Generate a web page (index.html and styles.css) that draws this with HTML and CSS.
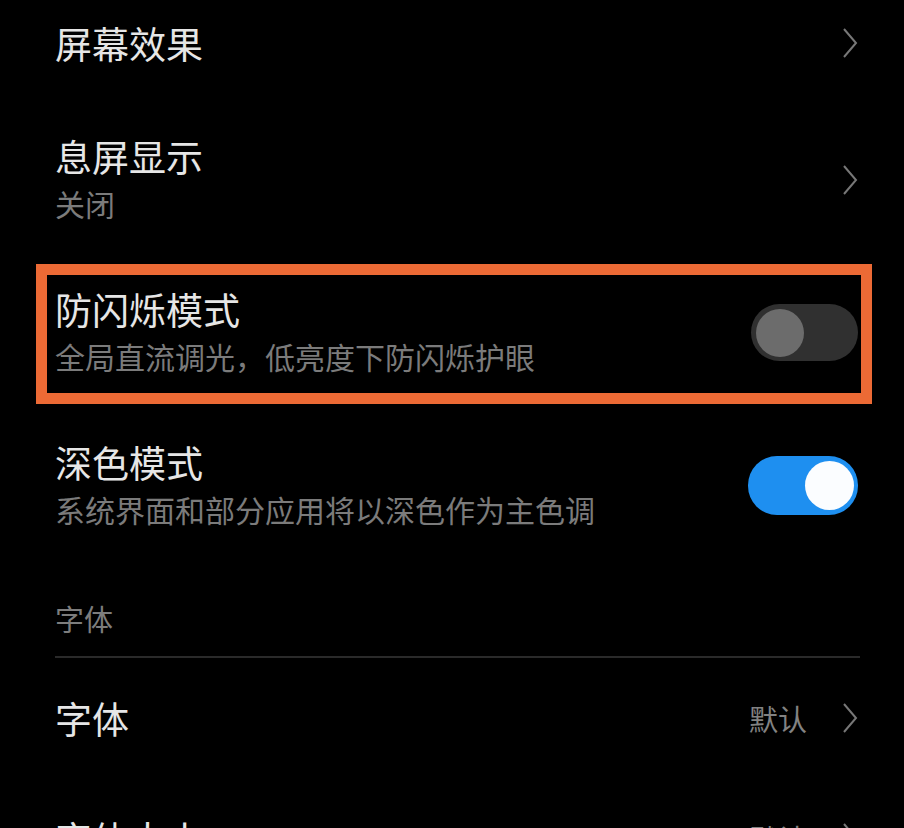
FILE: index.html
```html
<!DOCTYPE html>
<html lang="zh-CN">
<head>
  <meta charset="UTF-8">
  <meta name="viewport" content="width=device-width, initial-scale=1.0">
  <title>显示</title>
  <link rel="stylesheet" href="styles.css">
</head>
<body>
  <main class="list">
    <div class="row">
      <div class="text">
        <div class="title">屏幕效果</div>
      </div>
      <svg class="chevron" viewBox="0 0 16 30"><polyline points="2,1 14,15 2,29"/></svg>
    </div>

    <div class="row row-double">
      <div class="text">
        <div class="title">息屏显示</div>
        <div class="sub">关闭</div>
      </div>
      <svg class="chevron" viewBox="0 0 16 30"><polyline points="2,1 14,15 2,29"/></svg>
    </div>

    <div class="row row-double marked">
      <div class="text">
        <div class="title">防闪烁模式</div>
        <div class="sub">全局直流调光，低亮度下防闪烁护眼</div>
      </div>
      <div class="switch"><span class="knob"></span></div>
    </div>

    <div class="row row-double">
      <div class="text">
        <div class="title">深色模式</div>
        <div class="sub">系统界面和部分应用将以深色作为主色调</div>
      </div>
      <div class="switch on"><span class="knob"></span></div>
    </div>

    <div class="section-title">字体</div>

    <div class="row">
      <div class="text">
        <div class="title">字体</div>
      </div>
      <span class="value">默认</span>
      <svg class="chevron" viewBox="0 0 16 30"><polyline points="2,1 14,15 2,29"/></svg>
    </div>

    <div class="row">
      <div class="text">
        <div class="title">字体大小</div>
      </div>
      <span class="value">默认</span>
      <svg class="chevron" viewBox="0 0 16 30"><polyline points="2,1 14,15 2,29"/></svg>
    </div>
  </main>
</body>
</html>
```

FILE: styles.css
```css
html, body {
  margin: 0;
  padding: 0;
  background: #000;
}

body {
  height: 828px;
  overflow: hidden;
  font-family: "Noto Sans CJK SC", "Noto Sans", sans-serif;
  color: #e6e6e6;
}

.list {
  margin-top: -17px;
}

.row {
  position: relative;
  display: flex;
  align-items: center;
  height: 120px;
  padding: 0 46px 0 55px;
}

.row-double {
  height: 153px;
}

.text {
  flex: 1;
}

.title {
  font-size: 37px;
  line-height: 46px;
}

.sub {
  font-size: 30px;
  line-height: 48px;
  color: #7b7b7b;
}

.value {
  font-size: 29px;
  color: #828282;
  margin-right: 35px;
}

.chevron {
  width: 16px;
  height: 30px;
  fill: none;
  stroke: #777;
  stroke-width: 2;
}

/* highlight frame round the anti-flicker row */
.marked::after {
  content: "";
  position: absolute;
  top: 8px;
  bottom: 5px;
  left: 36px;
  right: 32px;
  border: 11px solid #ec6a35;
  pointer-events: none;
}

.switch {
  width: 107px;
  height: 57px;
  border-radius: 29px;
  background: #303030;
  display: flex;
  align-items: center;
  padding: 0 5px;
  box-sizing: border-box;
}

.switch .knob {
  width: 48px;
  height: 48px;
  border-radius: 50%;
  background: #6c6c6c;
}

.switch.on {
  width: 110px;
  height: 59px;
  background: #1e8ff0;
  justify-content: flex-end;
  padding: 0 4px;
}

.switch.on .knob {
  width: 49px;
  height: 49px;
  background: #fbfdff;
}

.section-title {
  margin: 0 44px 0 55px;
  padding: 41px 0 23px;
  font-size: 29px;
  line-height: 30px;
  color: #7d7d7d;
  border-bottom: 2px solid #2a2a2a;
}
```
